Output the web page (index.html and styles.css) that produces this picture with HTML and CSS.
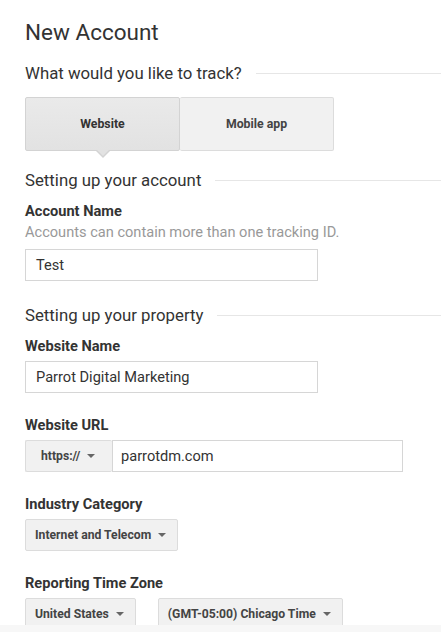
FILE: index.html
```html
<!DOCTYPE html>
<html>
<head>
<meta charset="utf-8">
<link rel="stylesheet" href="styles.css">
</head>
<body>
<main class="page">
  <h1 class="title">New Account</h1>

  <div class="section-head"><span>What would you like to track?</span><span class="rule"></span></div>

  <div class="toggle">
    <div class="toggle-btn active">Website<span class="pointer"></span></div>
    <div class="toggle-btn">Mobile app</div>
  </div>

  <div class="section-head sh-account"><span>Setting up your account</span><span class="rule"></span></div>

  <div class="field first">
    <div class="label">Account Name</div>
    <div class="help">Accounts can contain more than one tracking ID.</div>
    <div class="input w292">Test</div>
  </div>

  <div class="section-head sh-property"><span>Setting up your property</span><span class="rule"></span></div>

  <div class="field first">
    <div class="label">Website Name</div>
    <div class="input w292">Parrot Digital Marketing</div>
  </div>

  <div class="field">
    <div class="label">Website URL</div>
    <div class="url-group">
      <div class="select proto">https://<span class="caret"></span></div>
      <div class="input url">parrotdm.com</div>
    </div>
  </div>

  <div class="field">
    <div class="label">Industry Category</div>
    <div class="row">
      <div class="select">Internet and Telecom<span class="caret"></span></div>
    </div>
  </div>

  <div class="field">
    <div class="label">Reporting Time Zone</div>
    <div class="row tz">
      <div class="select">United States<span class="caret"></span></div>
      <div class="select">(GMT-05:00) Chicago Time<span class="caret"></span></div>
    </div>
  </div>
</main>
<div class="bottom-strip"></div>
</body>
</html>
```

FILE: styles.css
```css
html, body {
  margin: 0;
  padding: 0;
  background: #fff;
  height: 100%;
  overflow: hidden;
}
body {
  font-family: Roboto, "Liberation Sans", Arial, sans-serif;
  color: #333;
}
.page {
  padding: 18px 0 0 25px;
}
.title {
  margin: 0;
  font-size: 22.5px;
  font-weight: 400;
  line-height: 28px;
  color: #333;
}
.section-head {
  display: flex;
  align-items: center;
  gap: 14px;
  margin-top: 17px;
  font-size: 16.8px;
  line-height: 20px;
  color: #333;
}
.section-head .rule {
  flex: 1;
  height: 0;
  border-top: 1px solid #e6e6e6;
  margin-top: 1px;
}
.sh-account { margin-top: 19px; }
.sh-property { margin-top: 24px; }

.toggle {
  display: flex;
  margin-top: 14px;
  width: 309px;
  height: 54px;
  box-sizing: border-box;
}
.toggle-btn {
  position: relative;
  flex: 1;
  display: flex;
  align-items: center;
  justify-content: center;
  background: #f1f1f1;
  border: 1px solid #dcdcdc;
  font-size: 12.3px;
  font-weight: 700;
  color: #444;
  border-radius: 2px;
}
.toggle-btn + .toggle-btn {
  border-left: none;
}
.toggle-btn.active {
  background: linear-gradient(#eaeaea, #e2e2e2);
  border-color: #d3d3d3;
  color: #333;
}
.pointer {
  position: absolute;
  left: 50%;
  bottom: -8px;
  margin-left: -8px;
  width: 0;
  height: 0;
  border-left: 8px solid transparent;
  border-right: 8px solid transparent;
  border-top: 8px solid #d3d3d3;
}
.pointer::after {
  content: "";
  position: absolute;
  left: -7px;
  top: -9px;
  border-left: 7px solid transparent;
  border-right: 7px solid transparent;
  border-top: 7px solid #e2e2e2;
}

.field { margin-top: 23px; }
.field.first { margin-top: 12px; }
.label {
  font-size: 14.6px;
  font-weight: 700;
  line-height: 18px;
  color: #333;
  margin-bottom: 6px;
}
.help {
  font-size: 14.6px;
  line-height: 18px;
  color: #999;
  margin-top: -3px;
  margin-bottom: 8px;
}
.input {
  box-sizing: border-box;
  height: 32px;
  border: 1px solid #d6d6d6;
  padding: 0 10px;
  display: flex;
  align-items: center;
  font-size: 14.6px;
  color: #333;
  background: #fff;
}
.w292 { width: 293px; }

.url-group {
  display: flex;
  width: 378px;
}
.url-group .proto {
  width: 87px;
  border-right: none;
  justify-content: flex-start;
  padding-left: 15px;
}
.url-group .url {
  flex: 1;
  padding-left: 8px;
}

.row { display: flex; }
.row.tz { gap: 22px; }
.select {
  box-sizing: border-box;
  height: 32px;
  display: flex;
  align-items: center;
  padding: 0 11px 0 9px;
  background: #f1f1f1;
  border: 1px solid #dcdcdc;
  border-radius: 2px;
  font-size: 12.2px;
  font-weight: 700;
  color: #444;
  white-space: nowrap;
}
.caret {
  width: 0;
  height: 0;
  margin-left: 7px;
  border-left: 4px solid transparent;
  border-right: 4px solid transparent;
  border-top: 4px solid #666;
}

.bottom-strip {
  position: fixed;
  left: 0;
  right: 0;
  bottom: 0;
  height: 7px;
  background: #f7f7f7;
}
```
